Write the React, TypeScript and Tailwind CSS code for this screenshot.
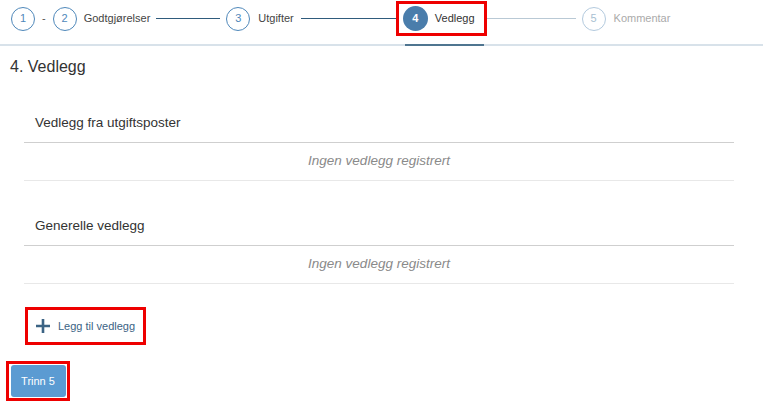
import React from 'react';

type StepState = 'done' | 'active' | 'todo';

function StepCircle({ num, state }: { num: number; state: StepState }) {
  if (state === 'active') {
    return (
      <div className="w-[25px] h-[25px] rounded-full bg-[#4a7dab] text-white text-[11px] font-bold flex items-center justify-center shrink-0">
        {num}
      </div>
    );
  }
  return (
    <div
      className={`w-[24px] h-[24px] rounded-full border flex items-center justify-center text-[11px] shrink-0 ${
        state === 'todo' ? 'border-[#b3cade] text-[#a8bfd2]' : 'border-[#4f88ba] text-[#4f88ba]'
      }`}
    >
      {num}
    </div>
  );
}

function Section({ title }: { title: string }) {
  return (
    <div>
      <div className="h-[38px] flex items-center pl-[11px] text-[13.5px] text-[#333] border-b border-[#cfcfcf]">
        {title}
      </div>
      <div className="h-[38px] flex items-center justify-center italic text-[13.5px] text-[#8a8a8a] border-b border-[#e8e8e8]">
        Ingen vedlegg registrert
      </div>
    </div>
  );
}

export default function App() {
  return (
    <div className="w-[763px] h-[407px] bg-white overflow-hidden font-['Liberation_Sans',Arial,sans-serif] text-[#333]">
      {/* Stepper */}
      <div className="relative h-[46px] border-b-2 border-[#d8e2ea]">
        <div className="flex items-center pl-[11px] pt-[6px] text-[11px]">
          <StepCircle num={1} state="done" />
          <span className="mx-[7px] text-[#555]">-</span>
          <StepCircle num={2} state="done" />
          <span className="ml-[7px] text-[#444]">Godtgjørelser</span>
          <div className="ml-[6px] w-[64px] h-px bg-[#2f5b7c]" />
          <div className="ml-[6px]">
            <StepCircle num={3} state="done" />
          </div>
          <span className="ml-[8px] text-[#444]">Utgifter</span>
          <div className="ml-[7px] w-[95px] h-px bg-[#2f5b7c]" />
          <div className="flex items-center border-[3px] border-[#ee0000] pl-[4px] pr-[9px] py-[2px] -my-[5px]">
            <StepCircle num={4} state="active" />
            <span className="ml-[7px] text-[#333]">Vedlegg</span>
          </div>
          <div className="w-[89px] h-px bg-[#b9c9d5]" />
          <div className="ml-[6px]">
            <StepCircle num={5} state="todo" />
          </div>
          <span className="ml-[8px] text-[#aaaaaa]">Kommentar</span>
        </div>
        <div className="absolute left-[405px] -bottom-[2px] w-[79px] h-[2px] bg-[#4f7590]" />
      </div>

      <h2 className="mt-[11px] ml-[10px] text-[16px] leading-[20px] text-[#333]">4. Vedlegg</h2>

      <div className="ml-[24px] w-[710px] mt-[28px]">
        <Section title="Vedlegg fra utgiftsposter" />
        <div className="mt-[27px]">
          <Section title="Generelle vedlegg" />
        </div>
      </div>

      <div className="ml-[25px] mt-[23px] w-[121px] h-[38px] border-[3px] border-[#ee0000] flex items-center pl-[7px]">
        <svg width="16" height="16" viewBox="0 0 16 16" className="shrink-0">
          <path d="M8 1v14M1 8h14" stroke="#3b6384" strokeWidth="2.6" />
        </svg>
        <span className="ml-[7px] text-[11px] text-[#3b6384]">Legg til vedlegg</span>
      </div>

      <div className="ml-[6px] mt-[16px] w-[64px] h-[40px] border-[3px] border-[#ee0000] flex items-center justify-center">
        <button className="w-[55px] h-[32px] rounded-[3px] bg-[#5b9bd2] text-white text-[11px]">
          Trinn 5
        </button>
      </div>
    </div>
  );
}
